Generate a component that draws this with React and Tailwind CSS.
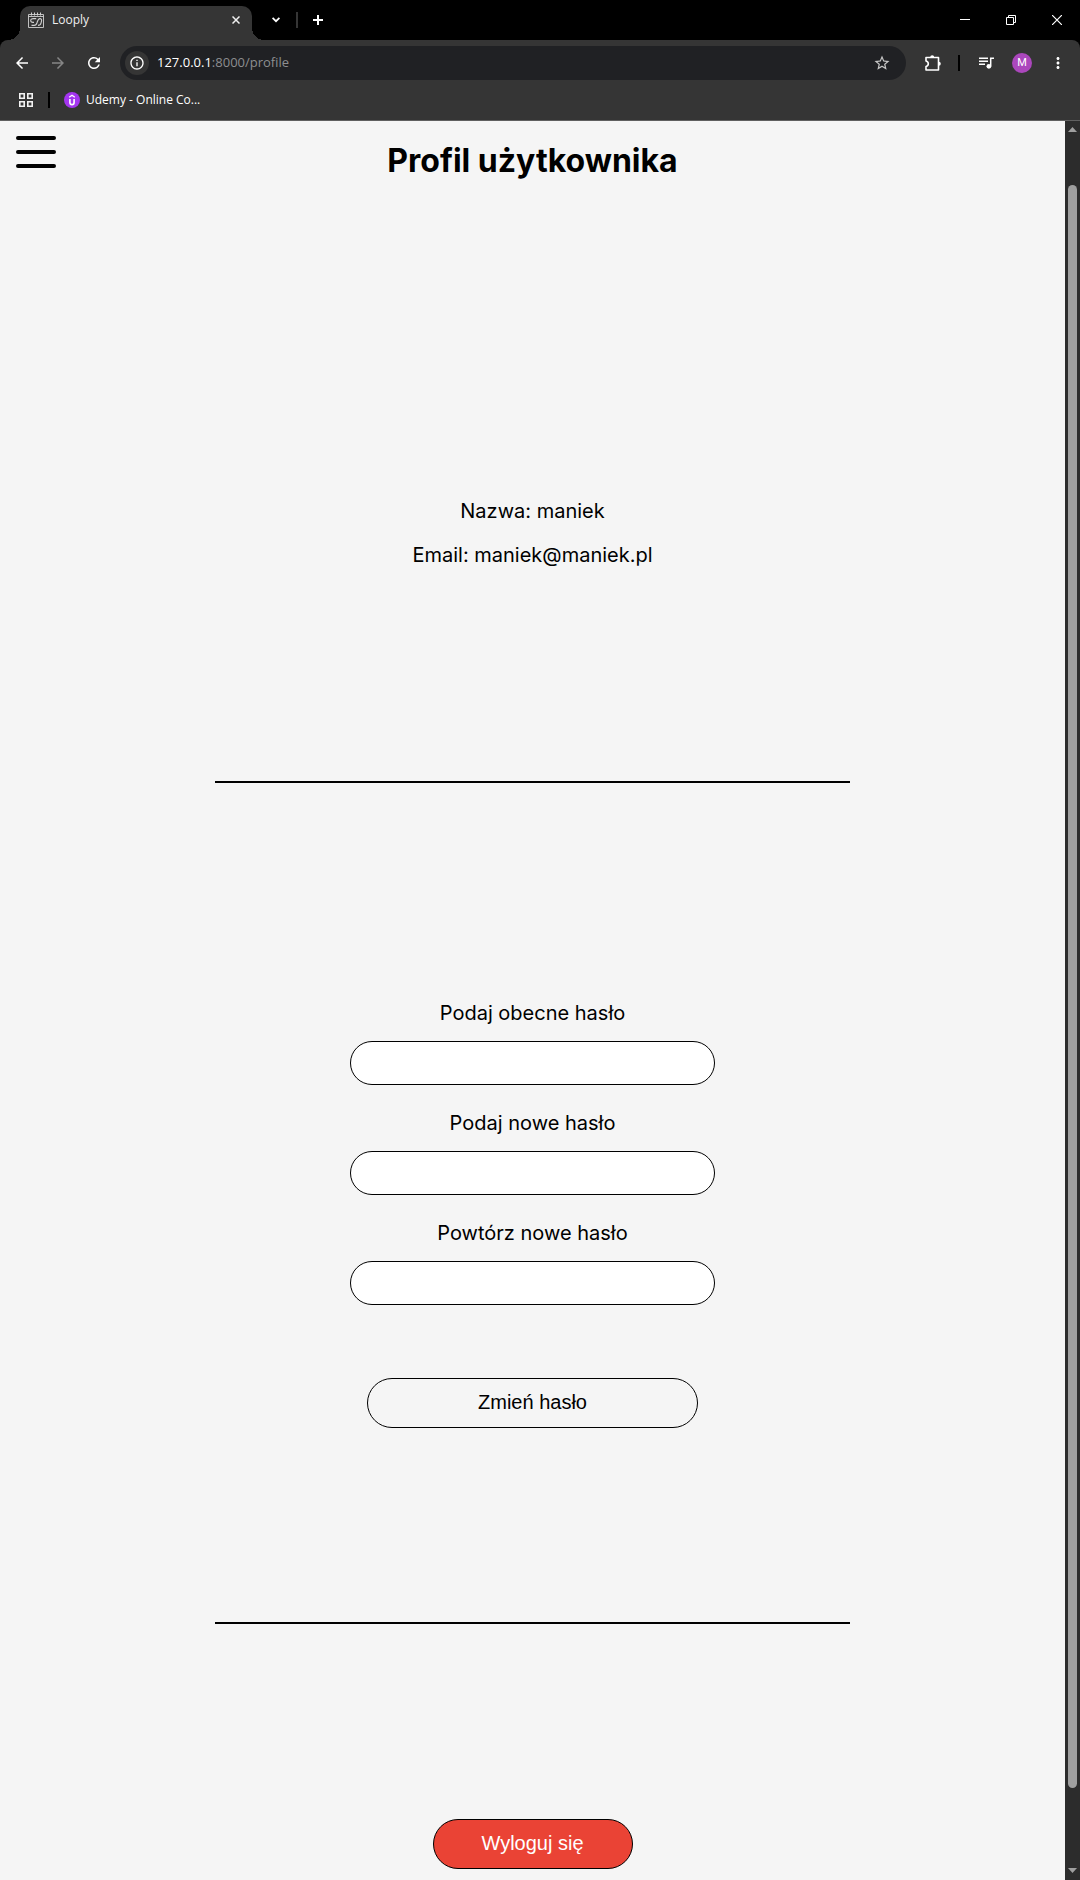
import { MdArrowBack, MdArrowForward, MdRefresh, MdInfoOutline, MdStarOutline, MdMoreVert } from "react-icons/md";

function CalendarIcon() {
  return (
    <svg width="16" height="16" viewBox="0 0 16 16" fill="none" stroke="#d0d0d0" aria-hidden="true">
      <path d="M.5 2.500h15v13H.5zM.5 4.500h15" strokeWidth=".9" />
      <path d="M3.500 .5v3M6.500 .5v3M9.500 .5v3M12.500 .5v3" />
      <path d="M8.200 6.600H5.300C3.700 6.600 2.700 7.400 2.700 8.600s.9 1.800 2.300 1.800h1M3.500 13.400h2.700c2.200 0 2.400-1.300 3-3.300.7-2.200 1.100-3.500 2.600-3.500s2.100 1 1.700 2.500l-.5 2c-.4 1.500-1.100 2.300-3 2.300" strokeWidth="1.100" />
    </svg>
  );
}

function PuzzleIcon() {
  return (
    <svg width="16" height="16" viewBox="0 0 16 16" aria-hidden="true">
      <path d="M1 2.500h12.500v12.500H1v-3.400c1.400-.3 2.300-1.300 2.300-2.800S2.400 6.300 1 6z" fill="none" stroke="#fff" strokeWidth="1.600" strokeLinejoin="round" />
      <path d="M5.200 2.200a2 2 0 0 1 4 0zM13.800 6.700a2 2 0 0 1 0 4z" fill="#fff" />
    </svg>
  );
}

function MediaIcon() {
  return (
    <svg width="16" height="14" viewBox="0 0 16 14" fill="none" stroke="#fff" strokeWidth="1.500" aria-hidden="true">
      <path d="M0 2.200h9M0 5.200h9M0 8.200h6M11.700 10V2.200H15" />
      <circle cx="9.900" cy="10.300" r="2.400" fill="#fff" stroke="none" />
    </svg>
  );
}

function AppsIcon() {
  return (
    <svg width="14" height="14" viewBox="0 0 14 14" fill="none" stroke="#f2f2f2" strokeWidth="1.600" aria-hidden="true">
      <path d="M.8.8h4.400v4.400H.8zM8.800.8h4.400v4.400H8.800zM.8 8.800h4.400v4.400H.8zM8.800 8.800h4.400v4.400H8.800z" />
    </svg>
  );
}

function UdemyIcon() {
  return (
    <svg width="16" height="16" viewBox="0 0 16 16" fill="none" aria-hidden="true">
      <circle cx="8" cy="8" r="8" fill="#a435f0" />
      <path d="M5.200 5.200L8 3.300l2.800 1.900" stroke="#fff" strokeWidth="1.300" />
      <path d="M5.900 7v3.400c0 1.500.9 2.200 2.100 2.200s2.100-.7 2.100-2.200V7" stroke="#fff" strokeWidth="1.600" />
    </svg>
  );
}

function TabStrip() {
  return (
    <div className="flex h-10 items-end bg-black pl-2 text-white">
      <div className="h-3 w-3 bg-[radial-gradient(circle_at_0_0,transparent_12px,#353535_12px)]" />
      <div className="flex h-[34px] w-[232px] items-center rounded-t-[10px] bg-[#353535] px-2 pb-1.5">
        <CalendarIcon />
        <span className="ml-2 grow text-xs text-[#f0f0f0]">Looply</span>
        <button type="button" aria-label="Zamknij kartę" className="flex h-4 w-4 items-center justify-center">
          <svg width="8" height="8" viewBox="0 0 8 8" stroke="#f0f0f0" strokeWidth="1.500"><path d="M.5.5l7 7M7.500.5l-7 7" /></svg>
        </button>
      </div>
      <div className="h-3 w-3 bg-[radial-gradient(circle_at_100%_0,transparent_12px,#353535_12px)]" />
      <div className="flex h-10 grow items-center">
        <button type="button" aria-label="Szukaj kart" className="flex h-6 w-6 items-center justify-center">
          <svg width="8" height="6" viewBox="0 0 8 6" fill="none" stroke="#fff" strokeWidth="1.700"><path d="M.6.800L4 4.200 7.400.8" /></svg>
        </button>
        <span className="ml-2 h-4 w-0.5 bg-[#353535]" />
        <button type="button" aria-label="Nowa karta" className="ml-2 flex h-6 w-6 items-center justify-center">
          <svg width="10" height="10" viewBox="0 0 10 10" stroke="#fff" strokeWidth="2"><path d="M5 0v10M0 5h10" /></svg>
        </button>
      </div>
      <div className="flex h-10">
        <button type="button" aria-label="Minimalizuj" className="flex w-[46px] items-center justify-center">
          <svg width="10" height="10" viewBox="0 0 10 10" stroke="#fff"><path d="M0 4.500h10" /></svg>
        </button>
        <button type="button" aria-label="Przywróć" className="flex w-[46px] items-center justify-center">
          <svg width="10" height="10" viewBox="0 0 10 10" stroke="#fff" fill="none"><path d="M.5 2.500h7v7h-7zM2.500 2.500v-2h7v7h-2" /></svg>
        </button>
        <button type="button" aria-label="Zamknij" className="flex w-[46px] items-center justify-center">
          <svg width="10" height="10" viewBox="0 0 10 10" stroke="#fff" strokeWidth="1.200"><path d="M0 0l10 10M10 0L0 10" /></svg>
        </button>
      </div>
    </div>
  );
}

function Toolbar() {
  return (
    <div className="bg-black">
      <div className="flex h-[46px] items-center rounded-t-lg bg-[#353535] px-[13px] text-white">
        <button type="button" aria-label="Wstecz" className="mr-[18px]"><MdArrowBack size={18} /></button>
        <button type="button" aria-label="Dalej" className="mr-[18px] text-[#868686]"><MdArrowForward size={18} /></button>
        <button type="button" aria-label="Odśwież"><MdRefresh size={18} /></button>
        <div className="ml-[17px] flex h-[34px] grow items-center rounded-full bg-[#202124] pr-[15px] pl-[5px]">
          <button type="button" aria-label="Informacje o stronie" className="flex h-6 w-6 items-center justify-center rounded-full bg-[#353535]">
            <MdInfoOutline size={16} />
          </button>
          <a href="#profile" className="ml-2 grow text-[13px] text-[#8d8e90]">
            <span className="text-white">127.0.0.1</span>:8000/profile
          </a>
          <button type="button" aria-label="Dodaj zakładkę" className="text-[#c7c7c7]"><MdStarOutline size={18} /></button>
        </div>
        <button type="button" aria-label="Rozszerzenia" className="ml-[19px]"><PuzzleIcon /></button>
        <span className="ml-[17px] h-4 w-0.5 bg-black" />
        <button type="button" aria-label="Multimedia" className="ml-[19px]"><MediaIcon /></button>
        <button type="button" aria-label="Profil" className="ml-[17px] flex h-5 w-5 items-center justify-center rounded-full bg-[#ab47bc] font-['Roboto',sans-serif] text-[11px]">M</button>
        <button type="button" aria-label="Menu przeglądarki" className="ml-[17px]"><MdMoreVert size={18} /></button>
      </div>
    </div>
  );
}

function Bookmarks() {
  return (
    <nav aria-label="Zakładki" className="flex h-[35px] items-center border-b border-[#606060] bg-[#353535] pb-1.5 pl-[19px] text-white">
      <button type="button" aria-label="Aplikacje"><AppsIcon /></button>
      <span className="ml-[15px] h-4 w-0.5 bg-black" />
      <a href="#udemy" className="ml-[14px] flex items-center gap-1.5 text-xs">
        <UdemyIcon />
        Udemy - Online Co...
      </a>
    </nav>
  );
}

function Scrollbar() {
  return (
    <div aria-hidden="true" className="flex w-[15px] flex-col items-center bg-[#2c2c2c] pt-1.5 pb-[7px]">
      <svg width="9" height="5" viewBox="0 0 9 5" fill="#9f9f9f"><path d="M0 5L4.500 0 9 5z" /></svg>
      <div className="mt-[53px] mb-20 w-[9px] grow rounded-full bg-[#9f9f9f]" />
      <svg width="9" height="5" viewBox="0 0 9 5" fill="#9f9f9f"><path d="M0 0l4.500 5L9 0z" /></svg>
    </div>
  );
}

const fields = [
  { id: "current-password", label: "Podaj obecne hasło" },
  { id: "new-password", label: "Podaj nowe hasło" },
  { id: "repeat-password", label: "Powtórz nowe hasło" },
];

function ProfilePage() {
  return (
    <main className="relative flex grow flex-col items-center bg-[#f5f5f5] pt-5 pb-[11px] font-['Inter',sans-serif] text-xl leading-6 text-black">
      <button type="button" aria-label="Menu" className="absolute top-[15px] left-4">
        <svg width="40" height="34" viewBox="0 0 40 34" stroke="#000" strokeWidth="4" strokeLinecap="round"><path d="M2 2h36M2 16h36M2 30h36" /></svg>
      </button>
      <h1 className="text-[32px] leading-10 font-bold">Profil użytkownika</h1>
      <section className="mt-[318px] flex flex-col items-center gap-5 pb-[214px]">
        <p>Nazwa: maniek</p>
        <p>Email: maniek@maniek.pl</p>
      </section>
      <hr className="w-3/5 max-w-[635px] border-t-2 border-black" />
      <form className="flex w-full flex-col items-center pt-[218px] pb-[194px]" onSubmit={(e) => e.preventDefault()}>
        <div className="flex w-[365px] max-w-full flex-col gap-[26px]">
          {fields.map((f) => (
            <div key={f.id} className="flex flex-col gap-4">
              <label htmlFor={f.id} className="text-center">{f.label}</label>
              <input id={f.id} type="password" className="h-11 w-full rounded-full border border-black bg-white px-5" />
            </div>
          ))}
        </div>
        <button type="submit" className="mt-[73px] h-[50px] w-[331px] rounded-full border border-black pb-0.5 font-['Liberation_Sans',Arial,sans-serif]">Zmień hasło</button>
      </form>
      <hr className="w-3/5 max-w-[635px] border-t-2 border-black" />
      <button type="button" className="mt-[195px] h-[50px] w-[200px] rounded-full border border-black bg-[#ea4335] pb-0.5 font-['Liberation_Sans',Arial,sans-serif] text-white">Wyloguj się</button>
    </main>
  );
}

export default function App() {
  return (
    <div className="flex min-h-screen flex-col font-['Open_Sans',sans-serif]">
      <header>
        <TabStrip />
        <Toolbar />
        <Bookmarks />
      </header>
      <div className="flex grow">
        <ProfilePage />
        <Scrollbar />
      </div>
    </div>
  );
}
